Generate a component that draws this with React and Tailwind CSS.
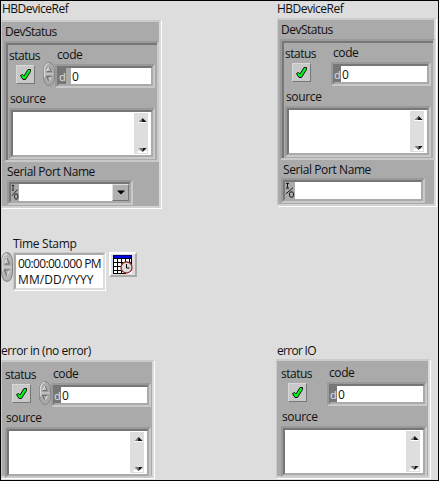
import React from 'react';
import clsx from 'clsx';

function Label({ children, className }) {
  return (
    <div className={clsx('h-4 whitespace-pre text-[12px] leading-4 text-[#111]', className)}>
      {children}
    </div>
  );
}

// Two-step sunken bevel shared by numeric, string and I/O fields.
function Field({ children, className }) {
  return (
    <div className={clsx('flex border-2 border-t-[#999] border-l-[#999] border-r-[#c9c9c9] border-b-[#c9c9c9]', className)}>
      <div className="flex min-w-0 flex-1 border-2 border-t-[#777] border-l-[#777] border-r-[#aaa] border-b-[#aaa] bg-white">
        {children}
      </div>
    </div>
  );
}

function Check() {
  return (
    <div className="flex h-[19px] w-[19px] shrink-0 items-center justify-center border border-t-[#d8d8d8] border-l-[#d8d8d8] border-r-[#777] border-b-[#777] bg-[#c8c8c8]">
      <svg width="13" height="13" viewBox="0 0 13 13">
        <path d="M1.5 7.5 L3.5 6.5 L5 8 L9 1.5 H11.5 V3.5 L6.5 11.5 H4 Z" fill="#00f51b" stroke="#111" strokeWidth="1" strokeLinejoin="round" />
      </svg>
    </div>
  );
}

function Spinner({ width = 12, height = 24, light = false }) {
  return (
    <svg className="shrink-0" width={width} height={height} viewBox="0 0 12 25" preserveAspectRatio="none">
      <rect x="0.5" y="0.5" width="11" height="24" rx="5.5" ry="8" fill={light ? '#b4b4b4' : '#a8a8a8'} stroke="#858585" />
      <path d="M1.5 16 V8 Q2 2 6 1.5" fill="none" stroke="#d8d8d8" strokeWidth="1.4" />
      <path d="M1 12.5 H11" stroke="#d5d5d5" />
      <path d="M3.5 10 L6 5 L8.5 10" fill="#bbb" stroke="#e5e5e5" />
      <path d="M6 5 L8.5 10 H3.5" fill="none" stroke="#666" />
      <path d="M8.5 15 L6 20" stroke="#e5e5e5" />
      <path d="M8.5 15 H3.5 L6 20" fill="none" stroke="#666" />
    </svg>
  );
}

function Scrollbar() {
  return (
    <div className="mt-px mr-[3px] mb-px ml-auto flex w-[14px] flex-col justify-between bg-[#dedede]">
      <svg width="14" height="11" viewBox="0 0 14 11">
        <path d="M4 10 L8.5 5 L13 10 Z" fill="#fff" />
        <path d="M4.5 9 L8.5 5 L12.5 9 Z" fill="#777" />
        <path d="M8.5 5 L12.5 9 H8 Z" fill="#111" />
      </svg>
      <svg width="14" height="8" viewBox="0 0 14 8">
        <path d="M3.5 6 H13" stroke="#fff" strokeWidth="2" />
        <path d="M4.5 2 H12.5 L8.5 6 Z" fill="#777" />
        <path d="M9 2 H12.5 L8.5 6 Z" fill="#111" />
      </svg>
    </div>
  );
}

function Numeric({ wide, className }) {
  return (
    <Field className={clsx('h-6 w-[100px] shrink-0', className)}>
      <div className={clsx('flex shrink-0 bg-[#777] text-[11px] leading-[17px] text-[#e0e0e0]', wide ? 'w-3' : 'w-[6px]')}>
        <span className={wide ? 'w-[7px]' : 'w-[6px] -ml-px'}>d</span>
        {wide && <span className="w-[5px] bg-[#aaa]" />}
      </div>
      <span className="pl-px text-[12px] leading-[17px] text-[#111]">0</span>
    </Field>
  );
}

function ErrorControls({ spinner, wide, className }) {
  return (
    <div className={className}>
      <div className="flex">
        <Label className="w-[48px] tracking-[-0.5px]">status</Label>
        <Label className="-mt-px tracking-[-0.4px]">code</Label>
      </div>
      <div className="flex h-[25px] pl-[7px]">
        <div className="mt-px">
          <Check />
        </div>
        <div className="-mt-[2px] flex w-5 shrink-0 justify-end">
          {spinner && <Spinner />}
        </div>
        <Numeric wide={wide} />
      </div>
      <Label className="mt-[2px] pl-px tracking-[-0.35px]">source</Label>
      <Field className="mt-px h-[51px] w-[146px]">
        <Scrollbar />
      </Field>
    </div>
  );
}

function SerialPort({ dropdown }) {
  return (
    <Field className={dropdown ? 'h-[25px] w-[126px]' : 'h-[25px] w-[144px]'}>
      <svg className="h-full shrink-0" width={dropdown ? 8 : 10} height="18" viewBox="0 0 10 18" preserveAspectRatio="none">
        <rect width="10" height="18" fill="#aaa" />
        <path d="M1 1.5 H4 M2.5 1 V6 M1 6.5 H4 M1 12.5 L8 6 M5.5 10.5 H7.5 L8.5 12 V14.5 L7.5 16 H5.5 L4.5 14.5 V12 Z" fill="none" stroke="#111" />
      </svg>
      <div className="flex-1" />
      {dropdown && (
        <div className="flex w-[17px] items-center justify-center border border-t-[#ddd] border-l-[#ddd] border-r-[#777] border-b-[#777] bg-[#b0b0b0]">
          <svg width="8" height="5" viewBox="0 0 8 5">
            <path d="M0 0.5 H8 L4 4.5 Z" fill="#000" />
          </svg>
        </div>
      )}
    </Field>
  );
}

function Panel({ children, className }) {
  return (
    <div className={clsx('border-2 border-l border-t-[#cacaca] border-l-[#cacaca] border-r-[#dadada] border-b-[#d2d2d2] bg-[#aaa] shadow-[1px_1px_0_#fff]', className)}>
      {children}
    </div>
  );
}

function DeviceRef({ input }) {
  return (
    <Panel className={input ? 'h-[188px] w-[160px]' : 'mt-px ml-px h-[188px] w-[159px]'}>
      <Label className="mt-[2px] ml-[3px] tracking-[-0.5px]">DevStatus</Label>
      <div className="mt-px ml-[2px] h-[121px] w-[155px] border-2 border-t-[#999] border-l-[#999] border-r-[#c9c9c9] border-b-[#c9c9c9]">
        <div className="h-full border-t-2 border-l-2 border-[#777] pt-[3px] pl-px">
          <ErrorControls spinner={input} wide={input} />
        </div>
      </div>
      <Label className="mt-[2px] ml-[5px] tracking-[-0.4px]">Serial Port Name</Label>
      <div className={input ? 'ml-[5px]' : 'ml-[3px]'}>
        <SerialPort dropdown={input} />
      </div>
    </Panel>
  );
}

function Calendar() {
  return (
    <div className="ml-[3px] h-[25px] w-7 border-2 border-t-white border-l-white border-r-[#aaa] border-b-[#aaa] bg-[#ddd]">
      <svg width="24" height="21" viewBox="0 0 24 21">
        <path d="M2 1 H21 V20 H2 Z" fill="#fff" />
        <path d="M2 1 H21 V4 H2 Z" fill="#0000e8" />
        <path d="M2.5 1 V20 M6.5 4 V20 M10.5 4 V20 M14.5 4 V20 M18.5 4 V10 M20.5 1 V12 M2 1.5 H21 M2 4.5 H21 M2 8.5 H21 M2 12.5 H21 M2 16.5 H14 M2 19.5 H14" stroke="#000" fill="none" />
        <path d="M3 2.5 H20" stroke="#0000e8" strokeWidth="2" />
        <circle cx="15.5" cy="13.5" r="5.5" fill="#ddd" stroke="#9b3030" strokeWidth="1.3" />
        <path d="M15.5 10 V14 H18.5" fill="none" stroke="#000" />
      </svg>
    </div>
  );
}

export default function App() {
  return (
    <main className="flex h-[481px] w-[439px] overflow-hidden border border-black bg-[#ddd] font-['Open_Sans','Noto_Sans',sans-serif]">
      <section className="flex w-[275px] shrink-0 flex-col">
        <Label className="ml-px tracking-[-0.5px]">HBDeviceRef</Label>
        <div className="mt-[3px]">
          <DeviceRef input />
        </div>
        <Label className="mt-[28px] ml-3 tracking-[-0.3px]">Time Stamp</Label>
        <div className="flex h-[39px]">
          <Spinner height={30} light />
          <div className="h-[39px] w-[93px] border border-t-[#ccc] border-l-[#ccc] border-r-white border-b-white">
            <div className="h-full border-2 border-t-[#aaa] border-l-[#aaa] border-r-[#ddd] border-b-[#ddd] bg-white pt-px pl-[2px] text-[12px] leading-4 whitespace-nowrap text-[#111]">
              <div className="tracking-[-0.62px]">00:00:00.000 PM</div>
              <div className="tracking-[0.1px]">MM/DD/YYYY</div>
            </div>
          </div>
          <Calendar />
        </div>
        <Label className="mt-[52px] tracking-[-0.47px]">error in (no error)</Label>
        <Panel className="mt-px h-[118px] w-[153px]">
          <ErrorControls spinner className="mt-[5px] ml-[3px]" />
        </Panel>
      </section>
      <section className="flex flex-1 flex-col">
        <Label className="ml-px tracking-[-0.5px]">HBDeviceRef</Label>
        <DeviceRef />
        <Label className="mt-[137px] ml-px tracking-[-0.7px]">error IO</Label>
        <Panel className="h-[119px] w-[154px]">
          <ErrorControls className="mt-[5px] ml-1" />
        </Panel>
      </section>
    </main>
  );
}
